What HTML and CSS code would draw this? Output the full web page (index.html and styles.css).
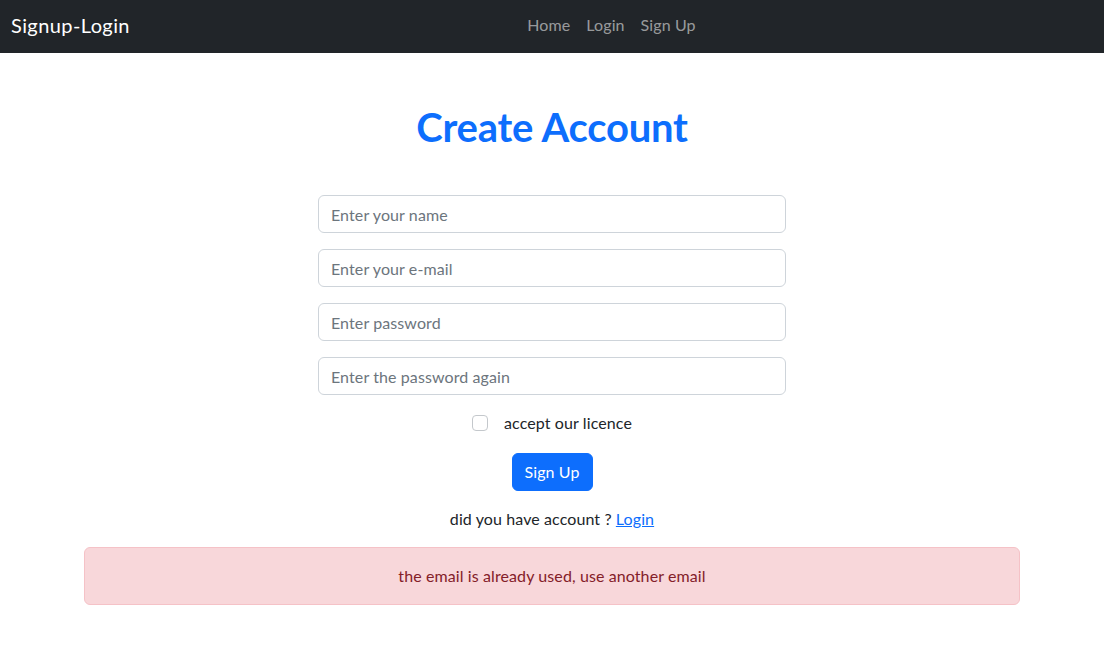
FILE: index.html
```html
<!DOCTYPE html>
<html lang="en">
<head>
  <meta charset="UTF-8">
  <title>Signup-Login</title>
  <link rel="stylesheet" href="styles.css">
</head>
<body>

<nav class="navbar">
  <a class="brand" href="#">Signup-Login</a>
  <ul class="nav-links">
    <li><a href="#">Home</a></li>
    <li><a href="#">Login</a></li>
    <li><a href="#">Sign Up</a></li>
  </ul>
</nav>

<div class="container">
  <h1 class="title">Create Account</h1>

  <form class="signup-form">
    <input class="form-control" type="text" placeholder="Enter your name">
    <input class="form-control" type="email" placeholder="Enter your e-mail">
    <input class="form-control" type="password" placeholder="Enter password">
    <input class="form-control" type="password" placeholder="Enter the password again">

    <label class="form-check">
      <input class="check-input" type="checkbox">
      <span>accept our licence</span>
    </label>

    <button class="btn-primary" type="button">Sign Up</button>

    <p class="switch">did you have account ? <a href="#">Login</a></p>
  </form>

  <div class="alert">the email is already used, use another email</div>
</div>

</body>
</html>
```

FILE: styles.css
```css
* {
  box-sizing: border-box;
}
body {
  margin: 0;
  font-family: Lato, "Noto Sans", sans-serif;
  font-size: 16px;
  line-height: 1.5;
  letter-spacing: 0.1px;
  color: #212529;
  background: #fff;
}
.navbar {
  display: flex;
  align-items: center;
  height: 53px;
  padding: 0 27px 3px 11px;
  background-color: #212529;
}
.brand {
  margin-right: 16px;
  color: #fff;
  font-size: 20px;
  letter-spacing: 0.4px;
  text-decoration: none;
}
.nav-links {
  flex: 1;
  display: flex;
  justify-content: center;
  margin: 0;
  padding: 0;
  list-style: none;
}
.nav-links a {
  display: block;
  padding: 8px;
  color: rgba(255, 255, 255, 0.55);
  text-decoration: none;
}
.container {
  width: 960px;
  margin: 0 auto;
  padding: 0 12px;
}
.title {
  margin: 50px 0 44px;
  text-align: center;
  color: #0d6efd;
  font-size: 40px;
  font-weight: 700;
  line-height: 1.2;
  letter-spacing: -0.2px;
}
.signup-form {
  width: 468px;
  margin: 0 auto;
  display: flex;
  flex-direction: column;
  align-items: center;
}
.form-control {
  display: block;
  width: 100%;
  height: 38px;
  margin-bottom: 16px;
  padding: 6px 12px;
  font: inherit;
  letter-spacing: inherit;
  color: #212529;
  background: #fff;
  border: 1px solid #ced4da;
  border-radius: 6px;
}
.form-control::placeholder {
  color: #6c757d;
}
.form-check {
  display: flex;
  align-items: center;
  gap: 16px;
  margin-bottom: 18px;
}
.check-input {
  appearance: none;
  width: 16px;
  height: 16px;
  margin: 0;
  border: 1px solid #c4c8cc;
  border-radius: 4px;
  background: #fff;
}
.btn-primary {
  height: 38px;
  padding: 6px 12px;
  font: inherit;
  letter-spacing: inherit;
  color: #fff;
  background-color: #0d6efd;
  border: 1px solid #0d6efd;
  border-radius: 6px;
}
.switch {
  margin: 16px 0 16px;
}
.switch a {
  color: #0d6efd;
}
.alert {
  padding: 16px;
  text-align: center;
  color: #842029;
  background-color: #f8d7da;
  border: 1px solid #f5c2c7;
  border-radius: 6px;
}
```
